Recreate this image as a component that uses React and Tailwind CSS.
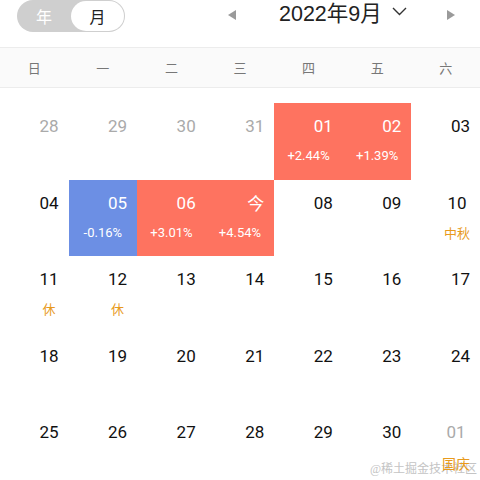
import React from "react";

const RED = "bg-[#fe7360]";
const BLUE = "bg-[#6c8fe4]";

const rows = [
  [
    { n: "28", gray: true },
    { n: "29", gray: true },
    { n: "30", gray: true },
    { n: "31", gray: true },
    { n: "01", bg: RED, pct: "+2.44%" },
    { n: "02", bg: RED, pct: "+1.39%" },
    { n: "03" },
  ],
  [
    { n: "04" },
    { n: "05", bg: BLUE, pct: "-0.16%" },
    { n: "06", bg: RED, pct: "+3.01%" },
    { n: "今", bg: RED, pct: "+4.54%", cjk: true },
    { n: "08" },
    { n: "09" },
    { n: "10", sub: "中秋" },
  ],
  [
    { n: "11", sub: "休" },
    { n: "12", sub: "休" },
    { n: "13" },
    { n: "14" },
    { n: "15" },
    { n: "16" },
    { n: "17" },
  ],
  [
    { n: "18" },
    { n: "19" },
    { n: "20" },
    { n: "21" },
    { n: "22" },
    { n: "23" },
    { n: "24" },
  ],
  [
    { n: "25" },
    { n: "26" },
    { n: "27" },
    { n: "28" },
    { n: "29" },
    { n: "30" },
    { n: "01", gray: true, sub: "国庆", big: true },
  ],
];

const week = ["日", "一", "二", "三", "四", "五", "六"];

function Cell({ c }) {
  const colored = !!c.bg;
  const numColor = colored ? "text-white" : c.gray ? "text-[#aaaaaa]" : "text-[#111111]";
  return (
    <div className={`h-[76.5px] flex flex-col ${c.bg || ""}`}>
      <div className="flex flex-col items-center self-end mr-[10px] mt-[11px]">
        <div
          className={`h-[24px] leading-[24px] text-[17px] ${numColor} ${
            c.cjk ? "[font-family:'Noto_Sans_CJK_SC',sans-serif]" : "[font-family:Roboto,sans-serif]"
          }`}
        >
          {c.n}
        </div>
        {c.sub && (
          <div
            className={`relative z-10 h-[20px] leading-[20px] ${
              c.big ? "text-[14px] mt-[9px]" : "text-[13px] mt-[8px]"
            } text-[#e89a1c] [font-family:'Noto_Sans_CJK_SC',sans-serif]`}
          >
            {c.sub}
          </div>
        )}
      </div>
      {c.pct && (
        <div className="mt-[8px] h-[20px] leading-[20px] text-center text-[13px] text-white [font-family:Roboto,sans-serif]">
          {c.pct}
        </div>
      )}
    </div>
  );
}

export default function App() {
  return (
    <div className="relative w-[480px] h-[480px] overflow-hidden bg-white">
      <div className="absolute right-[3px] bottom-[4px] text-[12px] leading-[14px] text-[#c4c4c4] [font-family:'Liberation_Serif','Noto_Sans_CJK_SC',serif]">
        @稀土掘金技术社区
      </div>

      {/* header */}
      <div className="h-[47px] flex items-start">
        <div className="ml-[17px] w-[108px] h-[32px] rounded-full bg-[#cfcfcf] flex items-center p-[1px]">
          <div className="w-[52px] text-center text-white text-[16px] [font-family:'Noto_Sans_CJK_SC',sans-serif]">
            年
          </div>
          <div className="ml-[1px] w-[53px] h-[30px] rounded-full bg-white flex items-center justify-center text-[16px] text-[#222] [font-family:'Noto_Sans_CJK_SC',sans-serif]">
            月
          </div>
        </div>
        <div className="ml-[103px] h-[28px] flex items-center">
          <svg width="8" height="10" viewBox="0 0 8 10" className="mt-[1px]">
            <polygon points="8,0 8,10 0,5" fill="#9a9a9a" />
          </svg>
          <div className="ml-[43px] text-[21.5px] text-[#222] [font-family:'Liberation_Sans','Noto_Sans_CJK_SC',sans-serif] leading-[28px]">
            2022年9月
          </div>
          <svg width="15" height="9" viewBox="0 0 15 9" className="ml-[10px] mb-[5px]">
            <polyline points="1,1 7.5,7.5 14,1" fill="none" stroke="#333" strokeWidth="1.4" />
          </svg>
          <svg width="8" height="10" viewBox="0 0 8 10" className="ml-[40px] mt-[1px]">
            <polygon points="0,0 0,10 8,5" fill="#9a9a9a" />
          </svg>
        </div>
      </div>

      {/* week header */}
      <div className="h-[41px] grid grid-cols-7 bg-[#fafafa] border-y border-[#ececec]">
        {week.map((w) => (
          <div
            key={w}
            className="flex items-center justify-center text-[13px] text-[#777] [font-family:'Noto_Sans_CJK_SC',sans-serif]"
          >
            {w}
          </div>
        ))}
      </div>

      {/* days */}
      <div className="mt-[15px] grid grid-cols-7">
        {rows.flat().map((c, i) => (
          <Cell key={i} c={c} />
        ))}
      </div>
    </div>
  );
}
